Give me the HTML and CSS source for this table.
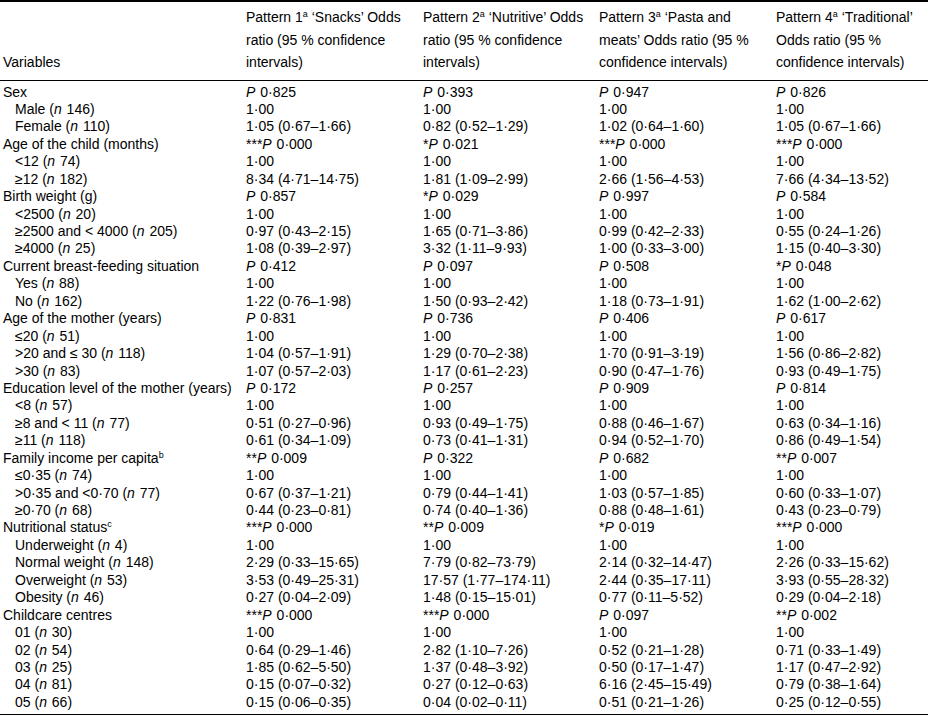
FILE: index.html
```html
<!DOCTYPE html>
<html lang="en">
<head>
<meta charset="utf-8">
<title>Odds ratios table</title>
<link rel="stylesheet" href="styles.css">
</head>
<body>
<table class="tbl">
  <colgroup>
    <col class="c0"><col class="c1"><col class="c2"><col class="c3"><col class="c4">
  </colgroup>
  <thead>
    <tr>
      <th class="var">Variables</th>
      <th>Pattern 1<sup>a</sup> ‘Snacks’ Odds<br>ratio (95 % confidence<br>intervals)</th>
      <th>Pattern 2<sup>a</sup> ‘Nutritive’ Odds<br>ratio (95 % confidence<br>intervals)</th>
      <th>Pattern 3<sup>a</sup> ‘Pasta and<br>meats’ Odds ratio (95 %<br>confidence intervals)</th>
      <th>Pattern 4<sup>a</sup> ‘Traditional’<br>Odds ratio (95 %<br>confidence intervals)</th>
    </tr>
  </thead>
  <tbody>
    <tr class="first"><td class="var">Sex</td><td><i>P</i> 0·825</td><td><i>P</i> 0·393</td><td><i>P</i> 0·947</td><td><i>P</i> 0·826</td></tr>
    <tr><td class="sub">Male (<i>n</i> 146)</td><td>1·00</td><td>1·00</td><td>1·00</td><td>1·00</td></tr>
    <tr><td class="sub">Female (<i>n</i> 110)</td><td>1·05 (0·67–1·66)</td><td>0·82 (0·52–1·29)</td><td>1·02 (0·64–1·60)</td><td>1·05 (0·67–1·66)</td></tr>
    <tr><td class="var">Age of the child (months)</td><td>***<i>P</i> 0·000</td><td>*<i>P</i> 0·021</td><td>***<i>P</i> 0·000</td><td>***<i>P</i> 0·000</td></tr>
    <tr><td class="sub">&lt;12 (<i>n</i> 74)</td><td>1·00</td><td>1·00</td><td>1·00</td><td>1·00</td></tr>
    <tr><td class="sub">≥12 (<i>n</i> 182)</td><td>8·34 (4·71–14·75)</td><td>1·81 (1·09–2·99)</td><td>2·66 (1·56–4·53)</td><td>7·66 (4·34–13·52)</td></tr>
    <tr><td class="var">Birth weight (g)</td><td><i>P</i> 0·857</td><td>*<i>P</i> 0·029</td><td><i>P</i> 0·997</td><td><i>P</i> 0·584</td></tr>
    <tr><td class="sub">&lt;2500 (<i>n</i> 20)</td><td>1·00</td><td>1·00</td><td>1·00</td><td>1·00</td></tr>
    <tr><td class="sub">≥2500 and &lt; 4000 (<i>n</i> 205)</td><td>0·97 (0·43–2·15)</td><td>1·65 (0·71–3·86)</td><td>0·99 (0·42–2·33)</td><td>0·55 (0·24–1·26)</td></tr>
    <tr><td class="sub">≥4000 (<i>n</i> 25)</td><td>1·08 (0·39–2·97)</td><td>3·32 (1·11–9·93)</td><td>1·00 (0·33–3·00)</td><td>1·15 (0·40–3·30)</td></tr>
    <tr><td class="var">Current breast-feeding situation</td><td><i>P</i> 0·412</td><td><i>P</i> 0·097</td><td><i>P</i> 0·508</td><td>*<i>P</i> 0·048</td></tr>
    <tr><td class="sub">Yes (<i>n</i> 88)</td><td>1·00</td><td>1·00</td><td>1·00</td><td>1·00</td></tr>
    <tr><td class="sub">No (<i>n</i> 162)</td><td>1·22 (0·76–1·98)</td><td>1·50 (0·93–2·42)</td><td>1·18 (0·73–1·91)</td><td>1·62 (1·00–2·62)</td></tr>
    <tr><td class="var">Age of the mother (years)</td><td><i>P</i> 0·831</td><td><i>P</i> 0·736</td><td><i>P</i> 0·406</td><td><i>P</i> 0·617</td></tr>
    <tr><td class="sub">≤20 (<i>n</i> 51)</td><td>1·00</td><td>1·00</td><td>1·00</td><td>1·00</td></tr>
    <tr><td class="sub">&gt;20 and ≤ 30 (<i>n</i> 118)</td><td>1·04 (0·57–1·91)</td><td>1·29 (0·70–2·38)</td><td>1·70 (0·91–3·19)</td><td>1·56 (0·86–2·82)</td></tr>
    <tr><td class="sub">&gt;30 (<i>n</i> 83)</td><td>1·07 (0·57–2·03)</td><td>1·17 (0·61–2·23)</td><td>0·90 (0·47–1·76)</td><td>0·93 (0·49–1·75)</td></tr>
    <tr><td class="var">Education level of the mother (years)</td><td><i>P</i> 0·172</td><td><i>P</i> 0·257</td><td><i>P</i> 0·909</td><td><i>P</i> 0·814</td></tr>
    <tr><td class="sub">&lt;8 (<i>n</i> 57)</td><td>1·00</td><td>1·00</td><td>1·00</td><td>1·00</td></tr>
    <tr><td class="sub">≥8 and &lt; 11 (<i>n</i> 77)</td><td>0·51 (0·27–0·96)</td><td>0·93 (0·49–1·75)</td><td>0·88 (0·46–1·67)</td><td>0·63 (0·34–1·16)</td></tr>
    <tr><td class="sub">≥11 (<i>n</i> 118)</td><td>0·61 (0·34–1·09)</td><td>0·73 (0·41–1·31)</td><td>0·94 (0·52–1·70)</td><td>0·86 (0·49–1·54)</td></tr>
    <tr><td class="var">Family income per capita<sup>b</sup></td><td>**<i>P</i> 0·009</td><td><i>P</i> 0·322</td><td><i>P</i> 0·682</td><td>**<i>P</i> 0·007</td></tr>
    <tr><td class="sub">≤0·35 (<i>n</i> 74)</td><td>1·00</td><td>1·00</td><td>1·00</td><td>1·00</td></tr>
    <tr><td class="sub">&gt;0·35 and &lt;0·70 (<i>n</i> 77)</td><td>0·67 (0·37–1·21)</td><td>0·79 (0·44–1·41)</td><td>1·03 (0·57–1·85)</td><td>0·60 (0·33–1·07)</td></tr>
    <tr><td class="sub">≥0·70 (<i>n</i> 68)</td><td>0·44 (0·23–0·81)</td><td>0·74 (0·40–1·36)</td><td>0·88 (0·48–1·61)</td><td>0·43 (0·23–0·79)</td></tr>
    <tr><td class="var">Nutritional status<sup>c</sup></td><td>***<i>P</i> 0·000</td><td>**<i>P</i> 0·009</td><td>*<i>P</i> 0·019</td><td>***<i>P</i> 0·000</td></tr>
    <tr><td class="sub">Underweight (<i>n</i> 4)</td><td>1·00</td><td>1·00</td><td>1·00</td><td>1·00</td></tr>
    <tr><td class="sub">Normal weight (<i>n</i> 148)</td><td>2·29 (0·33–15·65)</td><td>7·79 (0·82–73·79)</td><td>2·14 (0·32–14·47)</td><td>2·26 (0·33–15·62)</td></tr>
    <tr><td class="sub">Overweight (<i>n</i> 53)</td><td>3·53 (0·49–25·31)</td><td>17·57 (1·77–174·11)</td><td>2·44 (0·35–17·11)</td><td>3·93 (0·55–28·32)</td></tr>
    <tr><td class="sub">Obesity (<i>n</i> 46)</td><td>0·27 (0·04–2·09)</td><td>1·48 (0·15–15·01)</td><td>0·77 (0·11–5·52)</td><td>0·29 (0·04–2·18)</td></tr>
    <tr><td class="var">Childcare centres</td><td>***<i>P</i> 0·000</td><td>***<i>P</i> 0·000</td><td><i>P</i> 0·097</td><td>**<i>P</i> 0·002</td></tr>
    <tr><td class="sub">01 (<i>n</i> 30)</td><td>1·00</td><td>1·00</td><td>1·00</td><td>1·00</td></tr>
    <tr><td class="sub">02 (<i>n</i> 54)</td><td>0·64 (0·29–1·46)</td><td>2·82 (1·10–7·26)</td><td>0·52 (0·21–1·28)</td><td>0·71 (0·33–1·49)</td></tr>
    <tr><td class="sub">03 (<i>n</i> 25)</td><td>1·85 (0·62–5·50)</td><td>1·37 (0·48–3·92)</td><td>0·50 (0·17–1·47)</td><td>1·17 (0·47–2·92)</td></tr>
    <tr><td class="sub">04 (<i>n</i> 81)</td><td>0·15 (0·07–0·32)</td><td>0·27 (0·12–0·63)</td><td>6·16 (2·45–15·49)</td><td>0·79 (0·38–1·64)</td></tr>
    <tr class="last"><td class="sub">05 (<i>n</i> 66)</td><td>0·15 (0·06–0·35)</td><td>0·04 (0·02–0·11)</td><td>0·51 (0·21–1·26)</td><td>0·25 (0·12–0·55)</td></tr>
  </tbody>
</table>
</body>
</html>
```

FILE: styles.css
```css
html, body {
  margin: 0;
  padding: 0;
  background: #fff;
}

body {
  font-family: "Liberation Sans", Arial, Helvetica, sans-serif;
  font-size: 14px;
  color: #000;
}

.tbl {
  width: 928px;
  border-collapse: collapse;
  table-layout: fixed;
  border-top: 2px solid #000;
  border-bottom: 1.5px solid #000;
}

.c0 { width: 246px; }
.c1 { width: 177px; }
.c2 { width: 176px; }
.c3 { width: 177px; }
.c4 { width: 152px; }

.tbl th {
  font-weight: normal;
  text-align: left;
  vertical-align: bottom;
  line-height: 22.5px;
  padding: 4px 0 6px 0;
  border-bottom: 1.5px solid #000;
  white-space: nowrap;
}

.tbl td {
  padding: 0;
  line-height: 17.43px;
  white-space: nowrap;
  vertical-align: top;
}

.tbl .first td { padding-top: 3px; }
.tbl .last td { padding-bottom: 3px; }

.tbl .var { padding-left: 3px; }
.tbl .sub { padding-left: 15px; }

sup {
  font-size: 9px;
  line-height: 0;
  vertical-align: 5px;
}

i {
  font-style: italic;
  margin-right: 1px;
}
```
